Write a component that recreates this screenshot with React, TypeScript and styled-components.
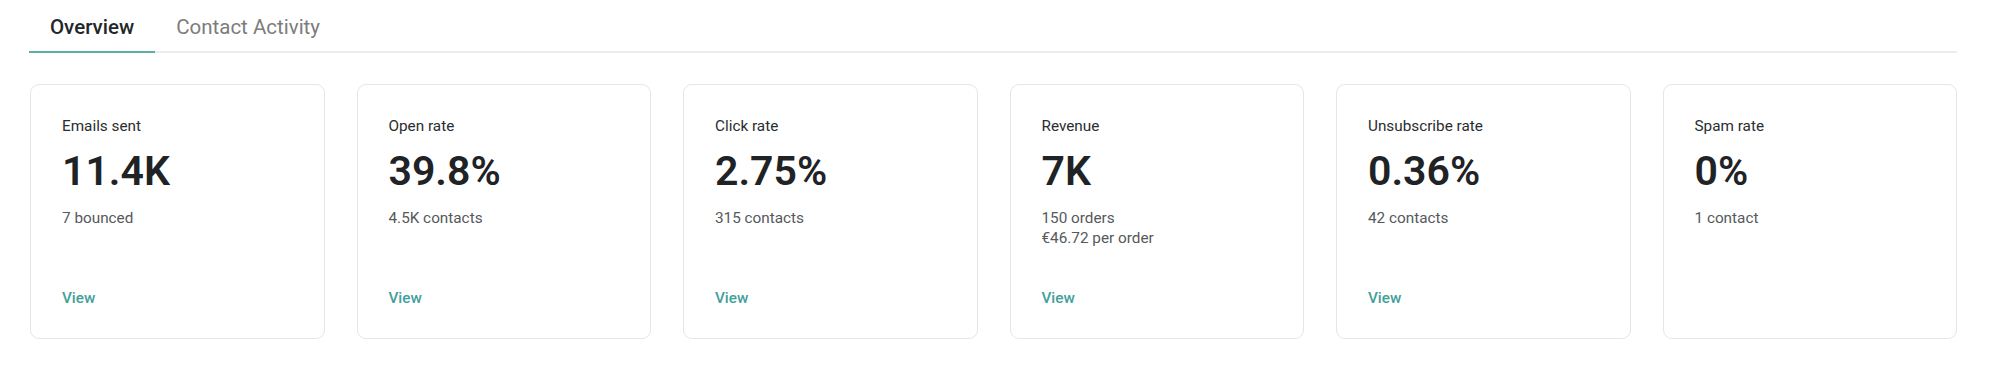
import React, { useState } from "react";
import styled, { createGlobalStyle } from "styled-components";

const GlobalStyle = createGlobalStyle`
  html, body { margin: 0; padding: 0; background: #ffffff; }
  body { font-family: Roboto, "Liberation Sans", Arial, sans-serif; color: #1f2326; }
`;

const Page = styled.div`
  padding: 0 42px 0 29px;
  box-sizing: border-box;
  width: 1999px;
`;

const TabBar = styled.div`
  display: flex;
  border-bottom: 2px solid #ececec;
  height: 51px;
  box-sizing: content-box;
`;

const Tab = styled.button<{ $active?: boolean }>`
  appearance: none;
  background: none;
  border: none;
  margin: 0 0 -2px 0;
  padding: 15px 21px 0 21px;
  height: 53px;
  box-sizing: border-box;
  border-bottom: 2px solid ${(p) => (p.$active ? "#5eada6" : "transparent")};
  font-family: Roboto, "Liberation Sans", Arial, sans-serif;
  font-size: 20.5px;
  font-weight: ${(p) => (p.$active ? 500 : 400)};
  color: ${(p) => (p.$active ? "#22272a" : "#7c7c7c")};
  display: flex;
  align-items: flex-start;
  cursor: pointer;
  line-height: 24px;
`;

const Grid = styled.div`
  display: grid;
  grid-template-columns: repeat(6, 1fr);
  gap: 32px;
  margin-top: 31px;
  padding-left: 1px;
`;

const Card = styled.div`
  height: 255px;
  box-sizing: border-box;
  border: 1px solid #e6e6e6;
  border-radius: 9px;
  padding: 31px 31px 30px;
  display: flex;
  flex-direction: column;
  background: #fff;
`;

const Label = styled.div`
  font-size: 15.3px;
  line-height: 20px;
  color: #2a2d2f;
`;

const Value = styled.div`
  font-size: 41px;
  line-height: 50px;
  font-weight: 600;
  color: #1f2326;
  margin-top: 10px;
`;

const Sub = styled.div`
  font-size: 15.3px;
  line-height: 20px;
  color: #55595b;
  margin-top: 12px;
`;

const ViewLink = styled.a`
  margin-top: auto;
  font-size: 15.3px;
  line-height: 20px;
  color: #42a099;
  font-weight: 500;
  text-decoration: none;
  cursor: pointer;
  align-self: flex-start;
`;

type Metric = { label: string; value: string; sub: string[]; view: boolean };

const metrics: Metric[] = [
  { label: "Emails sent", value: "11.4K", sub: ["7 bounced"], view: true },
  { label: "Open rate", value: "39.8%", sub: ["4.5K contacts"], view: true },
  { label: "Click rate", value: "2.75%", sub: ["315 contacts"], view: true },
  { label: "Revenue", value: "7K", sub: ["150 orders", "€46.72 per order"], view: true },
  { label: "Unsubscribe rate", value: "0.36%", sub: ["42 contacts"], view: true },
  { label: "Spam rate", value: "0%", sub: ["1 contact"], view: false },
];

export default function App() {
  const [tab, setTab] = useState(0);
  return (
    <>
      <GlobalStyle />
      <Page>
        <TabBar>
          <Tab $active={tab === 0} onClick={() => setTab(0)}>Overview</Tab>
          <Tab $active={tab === 1} onClick={() => setTab(1)}>Contact Activity</Tab>
        </TabBar>
        <Grid>
          {metrics.map((m) => (
            <Card key={m.label}>
              <Label>{m.label}</Label>
              <Value>{m.value}</Value>
              <Sub>
                {m.sub.map((s) => (
                  <div key={s}>{s}</div>
                ))}
              </Sub>
              {m.view && <ViewLink>View</ViewLink>}
            </Card>
          ))}
        </Grid>
      </Page>
    </>
  );
}
